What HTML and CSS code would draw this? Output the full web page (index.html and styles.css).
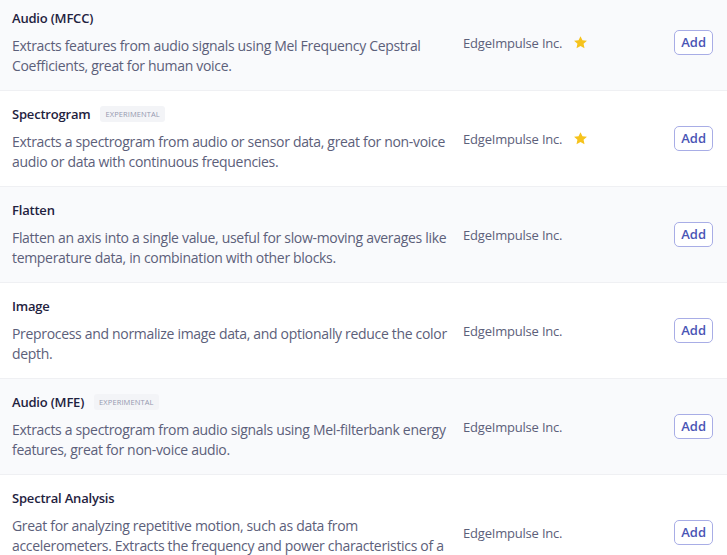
FILE: index.html
```html
<!DOCTYPE html>
<html>
<head>
<meta charset="utf-8">
<link rel="stylesheet" href="styles.css">
</head>
<body>
<div class="list">
  <div class="row odd">
    <div class="main">
      <div class="title">Audio (MFCC)</div>
      <div class="desc">Extracts features from audio signals using Mel Frequency Cepstral Coefficients, great for human voice.</div>
    </div>
    <div class="author">EdgeImpulse Inc.</div>
    <div class="star"><svg viewBox="0 0 24 24" width="15" height="15"><path d="M12 1.8l3.1 6.6 7.2.8-5.4 4.9 1.5 7.1L12 17.6l-6.4 3.6 1.5-7.1-5.4-4.9 7.2-.8z" fill="#f6c31c"/></svg></div>
    <div class="action"><button class="add">Add</button></div>
  </div>
  <div class="row">
    <div class="main">
      <div class="title">Spectrogram <span class="badge">EXPERIMENTAL</span></div>
      <div class="desc">Extracts a spectrogram from audio or sensor data, great for non-voice audio or data with continuous frequencies.</div>
    </div>
    <div class="author">EdgeImpulse Inc.</div>
    <div class="star"><svg viewBox="0 0 24 24" width="15" height="15"><path d="M12 1.8l3.1 6.6 7.2.8-5.4 4.9 1.5 7.1L12 17.6l-6.4 3.6 1.5-7.1-5.4-4.9 7.2-.8z" fill="#f6c31c"/></svg></div>
    <div class="action"><button class="add">Add</button></div>
  </div>
  <div class="row odd">
    <div class="main">
      <div class="title">Flatten</div>
      <div class="desc">Flatten an axis into a single value, useful for slow-moving averages like temperature data, in combination with other blocks.</div>
    </div>
    <div class="author">EdgeImpulse Inc.</div>
    <div class="star"></div>
    <div class="action"><button class="add">Add</button></div>
  </div>
  <div class="row">
    <div class="main">
      <div class="title">Image</div>
      <div class="desc">Preprocess and normalize image data, and optionally reduce the color depth.</div>
    </div>
    <div class="author">EdgeImpulse Inc.</div>
    <div class="star"></div>
    <div class="action"><button class="add">Add</button></div>
  </div>
  <div class="row odd">
    <div class="main">
      <div class="title">Audio (MFE) <span class="badge">EXPERIMENTAL</span></div>
      <div class="desc">Extracts a spectrogram from audio signals using Mel-filterbank energy features, great for non-voice audio.</div>
    </div>
    <div class="author">EdgeImpulse Inc.</div>
    <div class="star"></div>
    <div class="action"><button class="add">Add</button></div>
  </div>
  <div class="row">
    <div class="main">
      <div class="title">Spectral Analysis</div>
      <div class="desc">Great for analyzing repetitive motion, such as data from accelerometers. Extracts the frequency and power characteristics of a signal over time.</div>
    </div>
    <div class="author">EdgeImpulse Inc.</div>
    <div class="star"></div>
    <div class="action"><button class="add">Add</button></div>
  </div>
</div>
</body>
</html>
```

FILE: styles.css
```css
html, body {
  margin: 0;
  padding: 0;
  background: #ffffff;
  font-family: "Open Sans", "Liberation Sans", sans-serif;
}
.list {
  margin-top: -5px;
}
.row {
  display: flex;
  align-items: center;
  padding: 14px 14px 14px 12px;
  border-bottom: 1px solid #eff0f3;
  background: #ffffff;
}
.row.odd {
  background: #f9fafc;
}
.main {
  width: 436px;
  flex: none;
}
.title {
  font-size: 13px;
  line-height: 18px;
  font-weight: 600;
  letter-spacing: -0.2px;
  color: #1f2240;
  display: flex;
  align-items: center;
}
.badge {
  margin-left: 10px;
  font-size: 7.5px;
  font-weight: 400;
  letter-spacing: 0.1px;
  color: #9599b0;
  background: #f3f4f7;
  padding: 3px 5px;
  border-radius: 3px;
  line-height: 10px;
}
.desc {
  margin-top: 9px;
  font-size: 14px;
  line-height: 20px;
  letter-spacing: -0.32px;
  color: #5c607a;
}
.author {
  margin-left: 15px;
  width: 110px;
  flex: none;
  font-size: 13px;
  letter-spacing: -0.2px;
  color: #5c607a;
}
.star {
  width: 15px;
  height: 15px;
  flex: none;
  display: flex;
}
.action {
  flex: 1;
  display: flex;
  justify-content: flex-end;
}
.add {
  font-family: inherit;
  font-size: 13px;
  font-weight: 600;
  color: #4a55b5;
  background: #ffffff;
  border: 1px solid #a8ade6;
  border-radius: 5px;
  padding: 2px 6px;
  line-height: 19px;
}
```
